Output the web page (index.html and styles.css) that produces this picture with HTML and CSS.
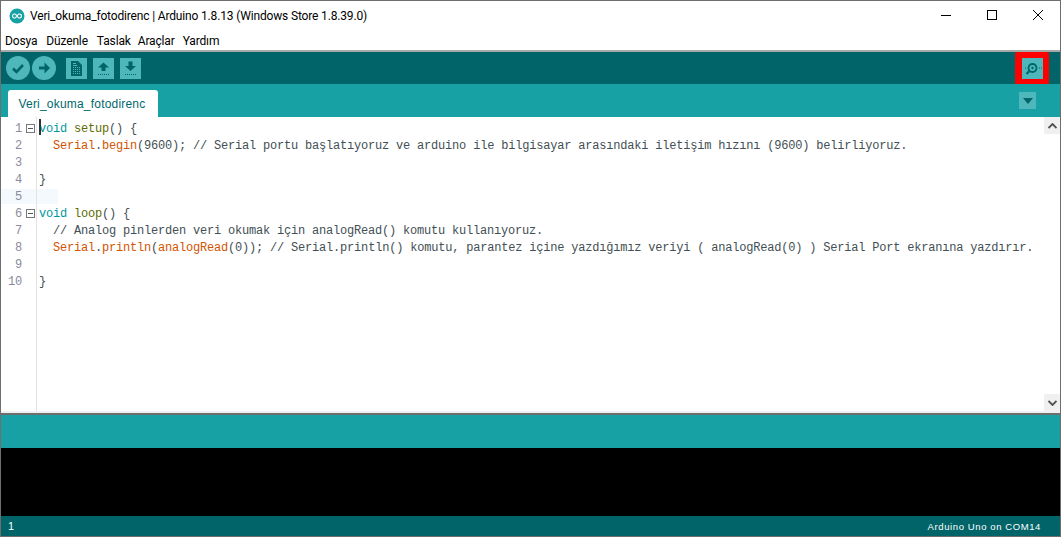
FILE: index.html
```html
<!DOCTYPE html>
<html lang="tr">
<head>
<meta charset="utf-8">
<title>Arduino</title>
<link rel="stylesheet" href="styles.css">
</head>
<body>
<div class="window">
  <header class="titlebar">
    <svg class="logo" width="16" height="16" viewBox="0 0 16 16"><circle cx="8" cy="8" r="7.5" fill="#17a1a5"/><path d="M3.500 8a2 2 0 0 1 3.600-1.200L8 8l.9 1.200A2 2 0 1 0 8.900 6.800L8 8l-.9 1.200A2 2 0 0 1 3.500 8z" fill="none" stroke="#fff" stroke-width="1.100"/></svg>
    <span class="title">Veri_okuma_fotodirenc | Arduino 1.8.13 (Windows Store 1.8.39.0)</span>
    <div class="controls">
      <svg class="ctl" width="46" height="29" viewBox="0 0 46 29"><path d="M18 14.500h10" stroke="#000"/></svg>
      <svg class="ctl" width="46" height="29" viewBox="0 0 46 29"><rect x="18.500" y="9.500" width="9" height="9" fill="none" stroke="#000"/></svg>
      <svg class="ctl" width="46" height="29" viewBox="0 0 46 29"><path d="M18 9l10 10M28 9L18 19" stroke="#000" fill="none"/></svg>
    </div>
  </header>
  <nav class="menubar"><span>Dosya</span><span>Düzenle</span><span class="m-tight2">Taslak</span><span class="m-tight1">Araçlar</span><span>Yardım</span></nav>
  <div class="toolbar">
    <div class="round"><svg width="24" height="24" viewBox="0 0 24 24"><path d="M7 12.500l3.500 3.500 6.500-7" fill="none" stroke="#006468" stroke-width="2.600"/></svg></div>
    <div class="round"><svg width="24" height="24" viewBox="0 0 24 24"><path d="M7 12h8" fill="none" stroke="#006468" stroke-width="3"/><path d="M12.500 6.500l5.500 5.500-5.500 5.500z" fill="#006468"/></svg></div>
    <div class="square first"><svg width="21" height="21" viewBox="0 0 21 21"><path d="M5 3h7l4 4v11H5z" fill="#006468"/><path d="M7 5h3v1H7zM7 7h4v1H7zM7 9h1v1H7zM9 9h1v1H9zM11 9h1v1h-1zM13 9h1v1h-1zM7 11h1v1H7zM9 11h1v1H9zM11 11h1v1h-1zM13 11h1v1h-1zM7 13h1v1H7zM9 13h1v1H9zM11 13h1v1h-1zM13 13h1v1h-1zM7 15h1v1H7zM9 15h1v1H9zM11 15h1v1h-1zM13 15h1v1h-1z" fill="#4db7bb"/></svg></div>
    <div class="square"><svg width="21" height="21" viewBox="0 0 21 21"><path d="M10.500 4.500l5.500 5h-3.500v3.500h-4V9.500H5z" fill="#006468"/><path d="M5 16.500h11" stroke="#006468" stroke-dasharray="1 1"/></svg></div>
    <div class="square"><svg width="21" height="21" viewBox="0 0 21 21"><path d="M8.500 3.500h4V8H16l-5.500 5L5 8h3.500z" fill="#006468"/><path d="M5 16.500h11" stroke="#006468" stroke-dasharray="1 1"/></svg></div>
    <div class="monitor-frame"><div class="square mon"><svg width="21" height="21" viewBox="0 0 21 21"><circle cx="10.500" cy="10" r="4" fill="none" stroke="#006468" stroke-width="1.800"/><circle cx="10.500" cy="10" r="1.200" fill="#006468"/><path d="M7.500 13l-3 3" stroke="#006468" stroke-width="2.200"/><path d="M3 10h1M17 10h1M19 10h1" stroke="#006468"/></svg></div></div>
  </div>
  <div class="tabbar">
    <div class="tab">Veri_okuma_fotodirenc</div>
    <div class="tabmenu"><svg width="10" height="6" viewBox="0 0 10 6"><path d="M0 0h10L5 6z" fill="#006468"/></svg></div>
  </div>
  <main class="editor">
    <div class="gutter">
      <div class="ln">1<i class="fold"></i></div>
      <div class="ln">2</div>
      <div class="ln">3</div>
      <div class="ln">4</div>
      <div class="ln cur">5</div>
      <div class="ln">6<i class="fold"></i></div>
      <div class="ln">7</div>
      <div class="ln">8</div>
      <div class="ln">9</div>
      <div class="ln">10</div>
    </div>
    <div class="code">
      <div class="cl first-line"><i class="caret"></i><b class="k">void</b> <b class="s">setup</b>() {</div>
      <div class="cl">  <b class="o">Serial</b>.<b class="o">begin</b>(9600); <b class="c">// Serial portu başlatıyoruz ve arduino ile bilgisayar arasındaki iletişim hızını (9600) belirliyoruz.</b></div>
      <div class="cl"> </div>
      <div class="cl">}</div>
      <div class="cl curline"> </div>
      <div class="cl"><b class="k">void</b> <b class="s">loop</b>() {</div>
      <div class="cl">  <b class="c">// Analog pinlerden veri okumak için analogRead() komutu kullanıyoruz.</b></div>
      <div class="cl">  <b class="o">Serial</b>.<b class="o">println</b>(<b class="o">analogRead</b>(0)); <b class="c">// Serial.println() komutu, parantez içine yazdığımız veriyi ( analogRead(0) ) Serial Port ekranına yazdırır.</b></div>
      <div class="cl"> </div>
      <div class="cl">}</div>
    </div>
    <div class="scroll"><div class="arrow"><svg width="9" height="6" viewBox="0 0 9 6"><path d="M.5 5L4.500 1l4 4" fill="none" stroke="#505050" stroke-width="1.800"/></svg></div><div class="arrow"><svg width="9" height="6" viewBox="0 0 9 6"><path d="M.5 1l4 4 4-4" fill="none" stroke="#505050" stroke-width="1.800"/></svg></div></div>
  </main>
  <div class="divider"></div>
  <div class="message"></div>
  <div class="console"></div>
  <footer class="status"><span class="line">1</span><span class="board">Arduino Uno on COM14</span></footer>
</div>
</body>
</html>
```
FILE: styles.css
```css
* { box-sizing: border-box; }
html, body { margin: 0; padding: 0; height: 100%; overflow: hidden; }
.window { width: 1061px; height: 537px; display: flex; flex-direction: column; border: 1px solid #6e6e6e; background: #fff; font-family: Roboto, "Noto Sans", sans-serif; }
.titlebar { height: 29px; flex: none; display: flex; align-items: center; padding-left: 8px; font-size: 12px; color: #000; }
.logo { margin-right: 5px; }
.title { flex: 1; letter-spacing: -.16px; }
.controls { display: flex; margin-right: -1px; }
.ctl { display: block; }
.menubar { height: 22px; flex: none; display: flex; gap: 9px; padding: 1px 0 0 4px; align-items: center; font-size: 12px; letter-spacing: -.15px; border-bottom: 2px solid #a8a8a8; }
.m-tight2 { margin-right: -2px; }
.m-tight1 { margin-right: -1px; }
.toolbar { height: 32px; flex: none; background: #006468; display: flex; align-items: center; padding: 0 11px 0 5px; }
.round { width: 24px; height: 24px; border-radius: 50%; background: #4db7bb; display: flex; margin-right: 2px; }
.square { width: 21px; height: 21px; background: #4db7bb; display: flex; margin-left: 6px; }
.round + .square.first { margin-left: 8px; }
.monitor-frame { margin-left: auto; border-style: solid; border-color: #f00; border-width: 6px 6px 6px 7px; border-radius: 2px; width: 34px; height: 33px; align-self: flex-start; }
.square.mon { margin: 0; }
.tabbar { height: 33px; flex: none; background: #17a1a5; display: flex; align-items: flex-end; justify-content: space-between; padding: 0 24px 0 7px; }
.tab { width: 150px; height: 27px; background: #fff; border-radius: 3px 3px 0 0; color: #00686c; font-family: "Liberation Sans", sans-serif; font-size: 12px; padding: 7px 0 0 10.500px; letter-spacing: .2px; }
.tabmenu { width: 17px; height: 17px; background: #4db7bb; display: flex; align-items: center; justify-content: center; align-self: center; }
.editor { flex: 1; display: flex; min-height: 0; background: #fff; }
.gutter { width: 36px; flex: none; border-right: 1px solid #e3e3e3; padding-top: 3px; }
.ln { height: 17px; font: 12px/19px "Liberation Mono", monospace; color: #8a8a9a; text-align: right; padding-right: 14px; position: relative; letter-spacing: -.2px; }
.ln.cur { background: linear-gradient(#f3f9fc, #f3f9fc) 0 1px / 100% 15px no-repeat; }
.fold { position: absolute; left: 25px; top: 4px; width: 9px; height: 9px; border: 1px solid #777; background: linear-gradient(#555, #555) center/5px 1px no-repeat; }
.code { flex: 1; padding-top: 3px; font: 12px/19px "Liberation Mono", monospace; letter-spacing: -.2px; color: #434f54; overflow: hidden; min-width: 0; }
.cl { height: 17px; padding-left: 2px; white-space: pre; position: relative; }
.caret { position: absolute; left: 2px; top: -1px; width: 2px; height: 16px; background: #333; }
.curline { background: linear-gradient(#f3f9fc, #f3f9fc) 0 1px / 21px 15px no-repeat; }
.cl b { font-weight: normal; }
.k { color: #00979c; }
.s { color: #5e6d03; }
.o { color: #d35400; }
.c { color: #434f54; }
.scroll { width: 16px; flex: none; background: #fff; display: flex; flex-direction: column; justify-content: space-between; }
.arrow { height: 17px; background: #f0f0f0; display: flex; align-items: center; justify-content: center; }
.divider { height: 4px; flex: none; background: #f0f0f0; border-bottom: 2px solid #6e6e6e; }
.message { height: 33px; flex: none; background: #17a1a5; }
.console { height: 68px; flex: none; background: #000; }
.status { height: 20px; flex: none; background: #006468; display: flex; justify-content: space-between; align-items: center; padding: 0 19px 0 7px; color: #fff; font-family: "Liberation Sans", sans-serif; font-size: 9.500px; }
.line { font-size: 11px; }
.board { letter-spacing: .6px; }
```
